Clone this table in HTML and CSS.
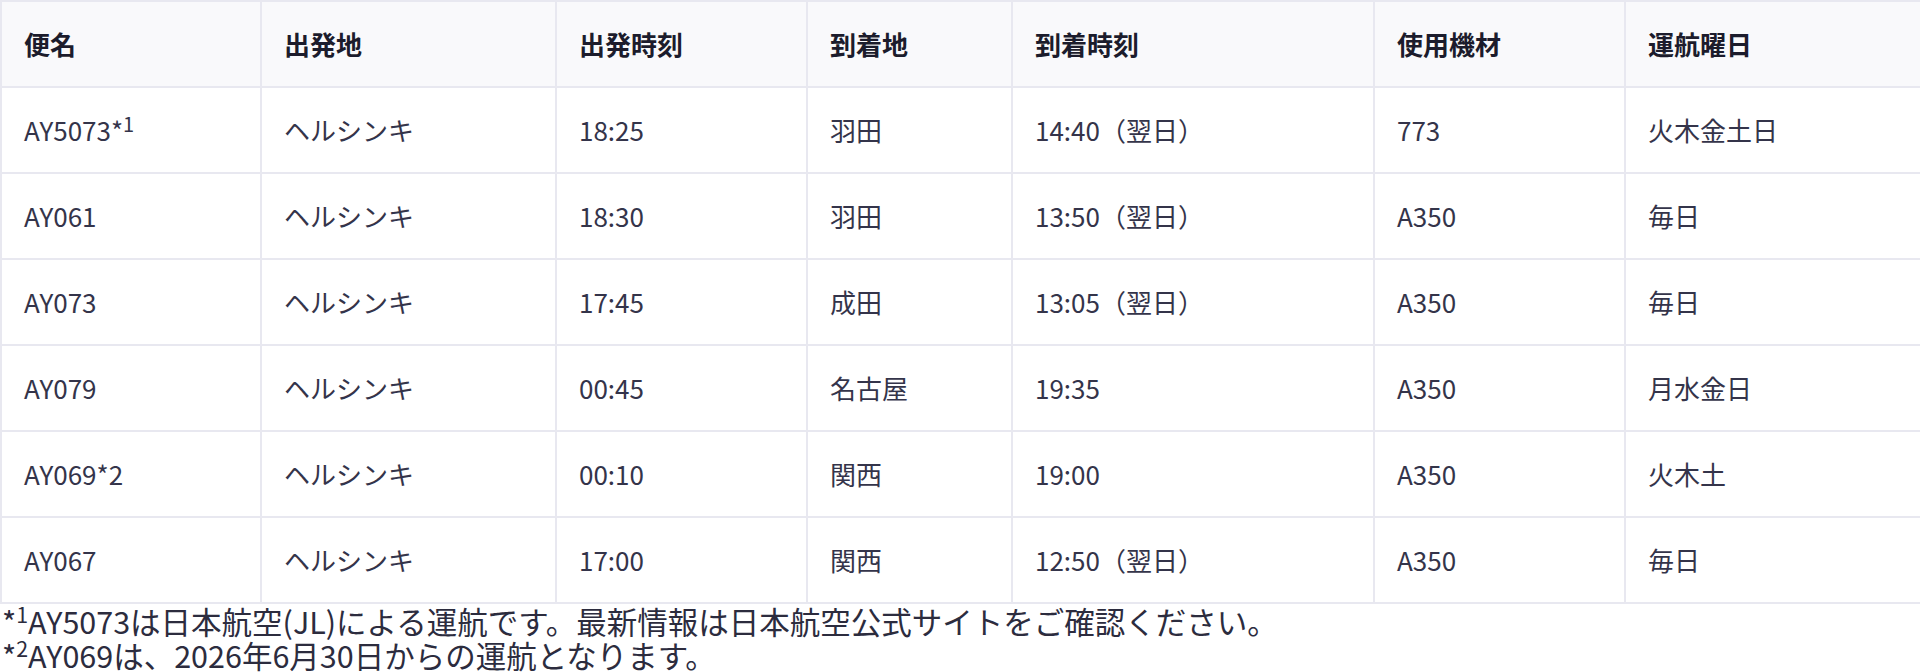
FILE: index.html
```html
<!DOCTYPE html>
<html lang="ja">
<head>
<meta charset="utf-8">
<title>フライトスケジュール</title>
<link rel="stylesheet" href="styles.css">
</head>
<body>
<div class="schedule">
  <table class="flights">
    <colgroup>
      <col class="c1"><col class="c2"><col class="c3"><col class="c4"><col class="c5"><col class="c6"><col class="c7">
    </colgroup>
    <thead>
      <tr>
        <th>便名</th><th>出発地</th><th>出発時刻</th><th>到着地</th><th>到着時刻</th><th>使用機材</th><th>運航曜日</th>
      </tr>
    </thead>
    <tbody>
      <tr><td>AY5073*<sup>1</sup></td><td>ヘルシンキ</td><td>18:25</td><td>羽田</td><td>14:40（翌日）</td><td>773</td><td>火木金土日</td></tr>
      <tr><td>AY061</td><td>ヘルシンキ</td><td>18:30</td><td>羽田</td><td>13:50（翌日）</td><td>A350</td><td>毎日</td></tr>
      <tr><td>AY073</td><td>ヘルシンキ</td><td>17:45</td><td>成田</td><td>13:05（翌日）</td><td>A350</td><td>毎日</td></tr>
      <tr><td>AY079</td><td>ヘルシンキ</td><td>00:45</td><td>名古屋</td><td>19:35</td><td>A350</td><td>月水金日</td></tr>
      <tr><td>AY069*2</td><td>ヘルシンキ</td><td>00:10</td><td>関西</td><td>19:00</td><td>A350</td><td>火木土</td></tr>
      <tr><td>AY067</td><td>ヘルシンキ</td><td>17:00</td><td>関西</td><td>12:50（翌日）</td><td>A350</td><td>毎日</td></tr>
    </tbody>
  </table>
  <div class="notes">
    <p class="note">*<sup>1</sup>AY5073は日本航空(JL)による運航です。最新情報は日本航空公式サイトをご確認ください。</p>
    <p class="note">*<sup>2</sup>AY069は、2026年6月30日からの運航となります。</p>
  </div>
</div>
</body>
</html>
```

FILE: styles.css
```css
html, body {
  margin: 0;
  padding: 0;
  background: #ffffff;
}

body {
  font-family: "Noto Sans CJK JP", "Noto Sans", sans-serif;
  color: #34344a;
}

.flights {
  width: 1920px;
  border-collapse: collapse;
  table-layout: fixed;
  font-size: 26px;
}

.c1 { width: 260px; }
.c2 { width: 295px; }
.c3 { width: 251px; }
.c4 { width: 205px; }
.c5 { width: 362px; }
.c6 { width: 251px; }
.c7 { width: 296px; }

.flights th,
.flights td {
  border: 2px solid #e8e8f0;
  padding: 0 22px;
  height: 84px;
  text-align: left;
  vertical-align: middle;
  line-height: 1.3;
  white-space: nowrap;
}

.flights th {
  background: #f9f9fb;
  font-weight: 700;
  color: #1c1c2c;
}

.flights td {
  font-weight: 400;
}

.flights sup {
  font-size: 0.77em;
  line-height: 0;
  vertical-align: 0.45em;
}

.notes {
  padding: 0 0 0 2px;
}

.note {
  margin: 0;
  font-size: 30.5px;
  line-height: 34px;
  color: #2c2c3e;
}

.note sup {
  font-size: 0.7em;
  line-height: 0;
  vertical-align: 0.5em;
}
```
